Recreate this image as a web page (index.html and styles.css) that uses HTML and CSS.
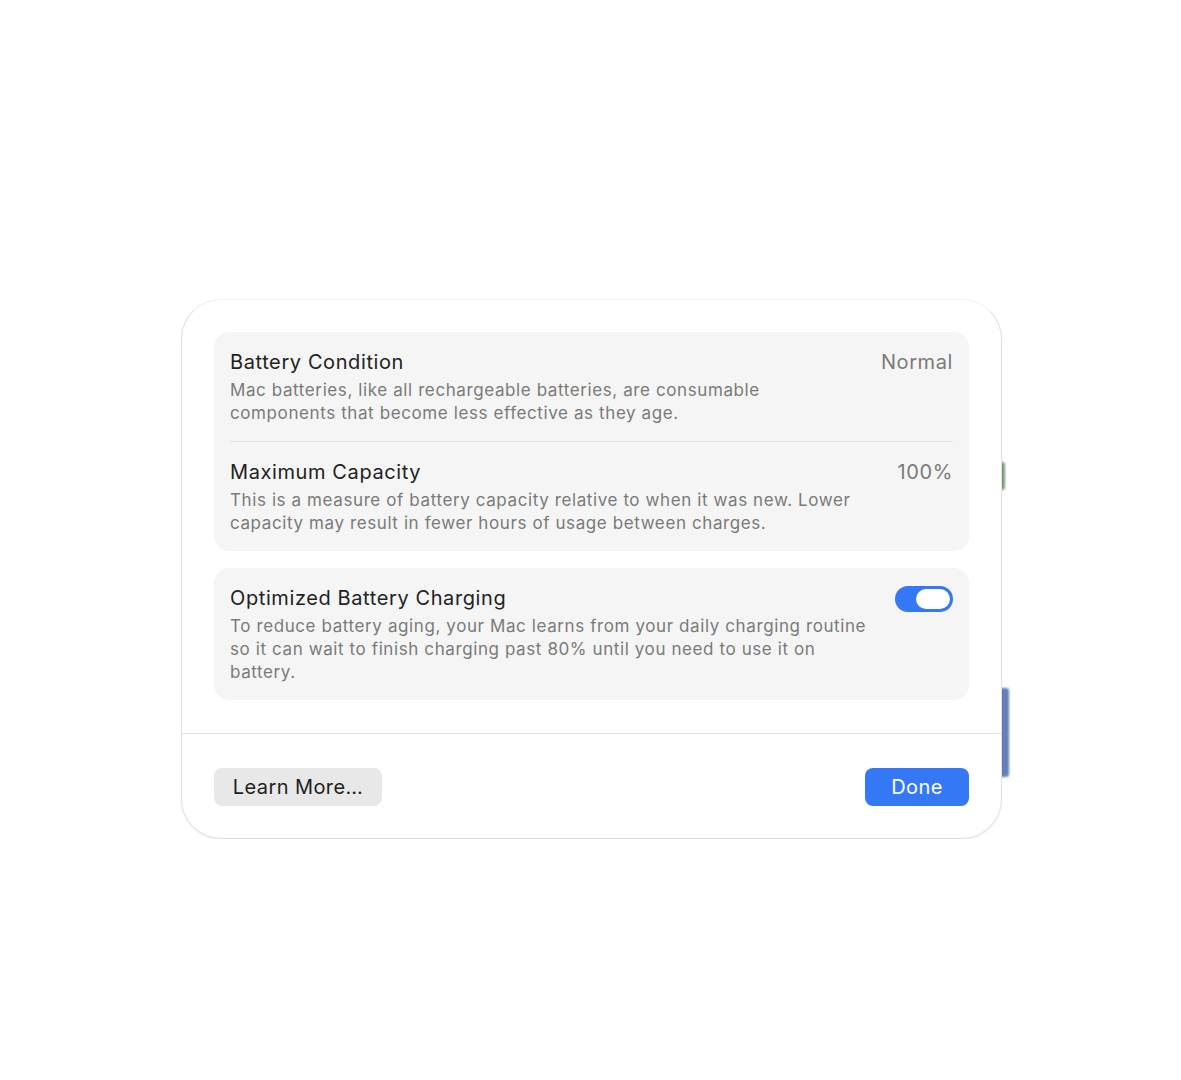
FILE: index.html
```html
<!DOCTYPE html>
<html lang="en">
<head>
<meta charset="UTF-8" />
<meta name="viewport" content="width=device-width, initial-scale=1" />
<title>Battery Health</title>
<link rel="stylesheet" href="styles.css">
</head>
<body>
<div class="stage">
  <!-- bits of the window behind the sheet -->
  <div class="peek peek-green"></div>
  <div class="peek peek-blue"></div>

  <div class="sheet">
    <div class="content">
      <div class="group">
        <div class="row">
          <div class="text">
            <div class="title">Battery Condition</div>
            <div class="desc">Mac batteries, like all rechargeable batteries, are consumable components that become less effective as they age.</div>
          </div>
          <div class="value">Normal</div>
        </div>
        <div class="sep"></div>
        <div class="row">
          <div class="text">
            <div class="title">Maximum Capacity</div>
            <div class="desc">This is a measure of battery capacity relative to when it was new. Lower capacity may result in fewer hours of usage between charges.</div>
          </div>
          <div class="value">100%</div>
        </div>
      </div>

      <div class="group">
        <div class="row">
          <div class="text">
            <div class="title">Optimized Battery Charging</div>
            <div class="desc">To reduce battery aging, your Mac learns from your daily charging routine so it can wait to finish charging past 80% until you need to use it on battery.</div>
          </div>
          <div class="toggle on"><div class="knob"></div></div>
        </div>
      </div>
    </div>

    <div class="footer">
      <button class="btn">Learn More…</button>
      <button class="btn primary">Done</button>
    </div>
  </div>
</div>
</body>
</html>
```

FILE: styles.css
```css
body {
  margin: 0;
  background: #fff;
  font-family: Inter, "Open Sans", "Liberation Sans", sans-serif;
  color: #222;
}
.stage {
  position: relative;
  width: 821px;
  margin: 299px 0 0 181px;
}
.peek {
  position: absolute;
  border-radius: 3px;
  filter: blur(1px);
}
.peek-green {
  left: 816px;
  top: 163px;
  width: 8px;
  height: 28px;
  background: #7f9a7a;
}
.peek-blue {
  left: 816px;
  top: 389px;
  width: 12px;
  height: 89px;
  background: #6280b8;
}
.sheet {
  position: relative;
  background: #fff;
  border: 1px solid #e0e0e0;
  border-top-color: #f0f0f0;
  border-radius: 40px;
  box-shadow: 0 1px 2px rgba(0, 0, 0, 0.06);
  overflow: hidden;
}
.content {
  padding: 32px 32px 33px;
  display: flex;
  flex-direction: column;
  gap: 17px;
}
.group {
  background: #f5f5f5;
  border-radius: 15px;
}
.row {
  display: flex;
  align-items: flex-start;
  justify-content: space-between;
  padding: 18px 16px 16px;
}
.text {
  width: 637px;
}
.title {
  font-size: 20px;
  line-height: 24px;
  letter-spacing: 0.6px;
  color: #222;
}
.desc {
  margin-top: 5px;
  font-size: 17px;
  line-height: 23px;
  color: #7a7a7a;
  letter-spacing: 0.6px;
}
.value {
  font-size: 20px;
  line-height: 24px;
  letter-spacing: 0.6px;
  color: #7a7a7a;
}
.sep {
  height: 1px;
  margin: 0 16px;
  background: #e4e4e4;
}
.toggle {
  position: relative;
  width: 58px;
  height: 26px;
  border-radius: 13px;
  background: #d8d8d8;
}
.toggle.on {
  background: #3478f6;
}
.knob {
  position: absolute;
  top: 3px;
  right: 3px;
  width: 34px;
  height: 20px;
  border-radius: 10px;
  background: #fff;
}
.footer {
  border-top: 1px solid #e2e2e2;
  padding: 34px 32px 32px;
  display: flex;
  justify-content: space-between;
}
.btn {
  height: 38px;
  padding: 0;
  border: none;
  border-radius: 8px;
  background: #e8e8e8;
  color: #222;
  font-family: inherit;
  font-size: 20px;
  letter-spacing: 0.4px;
  white-space: nowrap;
  cursor: pointer;
}
.btn:first-child {
  width: 168px;
}
.btn.primary {
  width: 104px;
  background: #3478f6;
  color: #fff;
}
```
